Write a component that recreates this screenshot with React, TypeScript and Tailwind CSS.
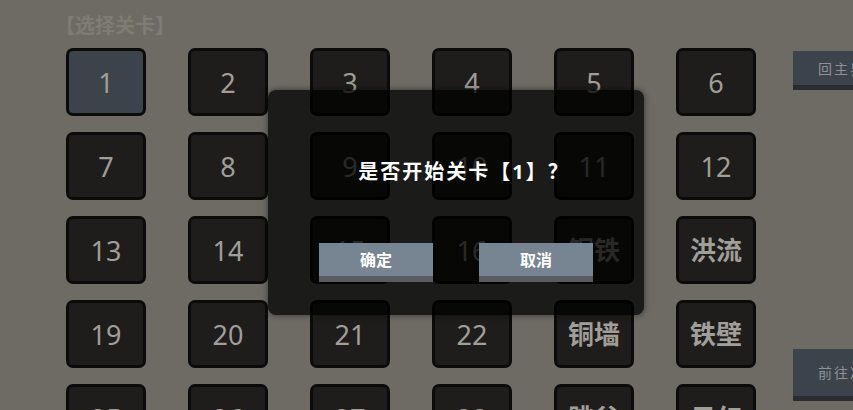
import React from 'react';

const levels: string[] = [
  '1', '2', '3', '4', '5', '6',
  '7', '8', '9', '10', '11', '12',
  '13', '14', '15', '16', '铜铁', '洪流',
  '19', '20', '21', '22', '铜墙', '铁壁',
  '25', '26', '27', '28', '跳谷', '云幻',
];

const font = '"Noto Sans", "Noto Sans CJK SC", sans-serif';

const LevelTile: React.FC<{ label: string; selected: boolean }> = ({ label, selected }) => {
  const isText = /[^0-9]/.test(label);
  return (
    <div
      className={`h-[68px] w-[80px] rounded-[7px] border-[3px] border-[#0b0b0a] flex items-center justify-center ${
        selected ? 'bg-[#3c434b]' : 'bg-[#1e1d1b]'
      }`}
    >
      <span
        className={`text-[#a09e99] leading-none ${isText ? 'text-[26px] font-bold' : 'text-[27px] font-normal'}`}
        style={{ fontFamily: font }}
      >
        {label}
      </span>
    </div>
  );
};

const SideButton: React.FC<{ label: string; className: string }> = ({ label, className }) => (
  <div className={`w-[110px] flex flex-col bg-[#3d434b] ${className}`}>
    <div className="flex-1 flex items-center pl-[25px] text-[14px] tracking-[2px] text-[#8d9197]">{label}</div>
    <div className="h-[5px] bg-[#2a2c30]" />
  </div>
);

const DialogButton: React.FC<{ label: string }> = ({ label }) => (
  <div className="w-[114px] h-[39px] flex flex-col bg-[#778592]">
    <div className="flex-1 flex items-center justify-center text-white text-[16px] font-bold">{label}</div>
    <div className="h-[6px] bg-[#595d61]" />
  </div>
);

export default function App() {
  return (
    <div
      className="relative w-[853px] h-[410px] overflow-hidden bg-[#6e6b65]"
      style={{ fontFamily: font }}
    >
      <div className="flex">
        <div className="pl-[55px] pt-[12px]">
          <div className="text-[20px] font-bold leading-[28px] text-[#7f7c76]">【选择关卡】</div>
          <div className="pl-[11px] pt-[8px] grid grid-cols-[repeat(6,80px)] gap-x-[42px] gap-y-[16px]">
            {levels.map((l, i) => (
              <LevelTile key={i} label={l} selected={i === 0} />
            ))}
          </div>
        </div>
        <div className="ml-[37px] flex flex-col">
          <SideButton label="回主界面" className="mt-[51px] h-[39px]" />
          <SideButton label="前往准备" className="mt-[259px] h-[52px]" />
        </div>
      </div>

      <div className="absolute left-[268px] top-[90px] w-[376px] h-[225px] rounded-[8px] bg-black/75 shadow-[0_0_6px_rgba(0,0,0,0.5)] flex flex-col items-center">
        <div className="mt-[70px] pl-[16px] text-white text-[20px] font-bold leading-[24px] tracking-[2px]">是否开始关卡【1】？</div>
        <div className="mt-[59px] flex gap-[46px]">
          <DialogButton label="确定" />
          <DialogButton label="取消" />
        </div>
      </div>
    </div>
  );
}
